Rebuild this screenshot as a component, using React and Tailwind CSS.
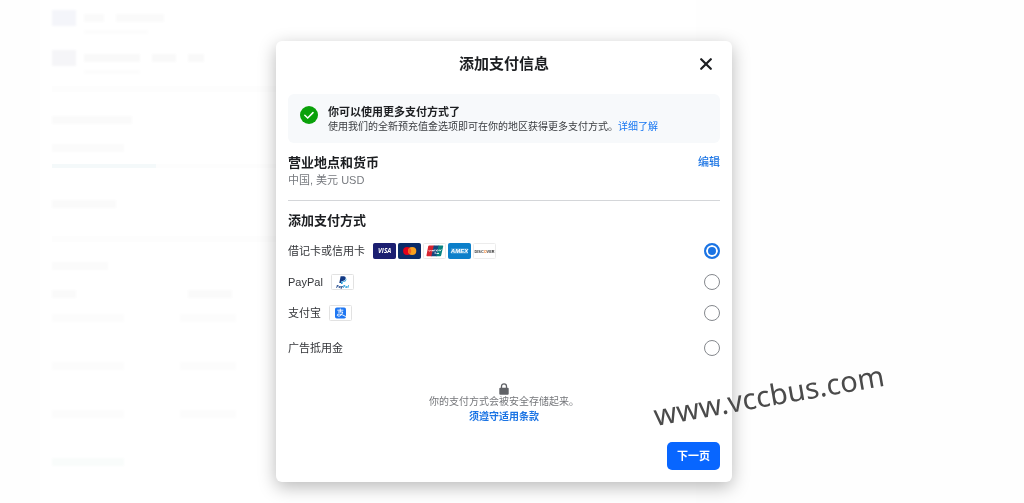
import { useState } from 'react';
import clsx from 'clsx';

function CardFrame({ bg, border, children }) {
  return (
    <svg viewBox="0 0 23 16" className="w-[23px] h-4 shrink-0" aria-hidden="true">
      <rect x="0.5" y="0.5" width="22" height="15" rx="1" fill={bg} stroke={border || bg} />
      {children}
    </svg>
  );
}

function Visa() {
  return (
    <CardFrame bg="#1b1f71">
      <text x="11.7" y="10.3" textAnchor="middle" fontFamily="Open Sans" fontSize="6.4" fontWeight="700" fontStyle="italic" fill="#fff">
        VISA
      </text>
    </CardFrame>
  );
}

function Mastercard() {
  return (
    <CardFrame bg="#0a2c69">
      <circle cx="9.2" cy="8" r="4.1" fill="#e2001a" />
      <circle cx="14.2" cy="8" r="4.1" fill="#f9a11f" />
      <path d="M11.7 4.8a4.1 4.1 0 0 1 0 6.4a4.1 4.1 0 0 1 0-6.4z" fill="#f26122" />
    </CardFrame>
  );
}

function UnionPay() {
  return (
    <CardFrame bg="#fff" border="#e8e8e8">
      <path d="M6.2 2.5h5.2L9 13.2H4.2q-.9 0-.7-.9L5.2 3.3q.2-.8 1-.8z" fill="#d8232f" />
      <path d="M10.8 2.5h5.4L13.8 13.2H8.4z" fill="#16467e" />
      <path d="M15.6 2.5h4q.8 0 .6.8l-2 9q-.2.9-1 .9h-4z" fill="#08827f" />
      <path d="M5.6 7.6q.9 1.5 2-.6M8.4 8.3l.9-1.3.7 1.3.8-1.5M12 6.4l-.4 1.8M13.1 8.3q.5-2 1.6-1.4t-.3 1.5M16.3 6.5l.7 1.6 1.3-1.8" fill="none" stroke="#fff" strokeWidth="0.8" />
      <path d="M11.5 10h1.5M13.5 10.4h2.5" stroke="#fff" strokeWidth="1" />
    </CardFrame>
  );
}

function Amex() {
  return (
    <CardFrame bg="#0b7fca">
      <rect x="3" y="5.2" width="17" height="5.6" fill="#7fc0ea" opacity="0.4" />
      <text x="11.5" y="10.1" textAnchor="middle" fontFamily="Liberation Sans" fontSize="6" fontWeight="700" fontStyle="italic" fill="#fff">
        AMEX
      </text>
    </CardFrame>
  );
}

function Discover() {
  return (
    <CardFrame bg="#fff" border="#ececec">
      <text x="11.5" y="9.5" textAnchor="middle" fontFamily="Liberation Sans" fontSize="3.8" fontWeight="700" fill="#333">
        DISC<tspan fill="#f47b20">O</tspan>VER
      </text>
    </CardFrame>
  );
}

function PayPal() {
  return (
    <CardFrame bg="#fff" border="#e2e2e2">
      <path d="M9.6 2.2h3.4q2.2.2 1.7 2.4-.5 2.3-2.9 2.300h-1.200L10.200 9H8.300z" fill="#123984" />
      <path d="M14.900 4.200q.8.6.4 1.900-.6 2-2.800 2h-.7l-.4 1.900H9.900l.5-2.600h1.400q2.700 0 3.100-3.200z" fill="#1f9ada" />
      <text x="11.5" y="13.6" textAnchor="middle" fontFamily="Open Sans" fontSize="3.8" fontWeight="800" fontStyle="italic" fill="#153f86">
        Pay<tspan fill="#1f9ada">Pal</tspan>
      </text>
    </CardFrame>
  );
}

function Alipay() {
  return (
    <CardFrame bg="#fff" border="#e2e2e2">
      <rect x="6" y="2.5" width="11" height="11" rx="1.8" fill="#1f77f2" />
      <path d="M8.300 5.200h6M11.300 3.600v3.400M9 7h4.800q-.7 3-3.100 4-2.300.5-2.500-.8 0-1.500 2.500-1.100 2.700.5 6.300 2.500" fill="none" stroke="#fff" strokeWidth="0.9" />
    </CardFrame>
  );
}

const METHODS = [
  { id: 'card', label: '借记卡或信用卡', logos: [Visa, Mastercard, UnionPay, Amex, Discover], row: 'h-[31px]' },
  { id: 'paypal', label: 'PayPal', logos: [PayPal], row: 'h-[31px]' },
  { id: 'alipay', label: '支付宝', logos: [Alipay], row: 'h-[31px]' },
  { id: 'coupon', label: '广告抵用金', logos: [], row: 'h-[39px]' },
];

// Washed-out billing page that sits behind the dialog
function BillingPage() {
  return (
    <div className="h-full pl-10 bg-[#fefefe]" aria-hidden="true">
      <div className="w-2/3 h-full pl-3 bg-white">
        <div className="flex gap-2 pt-[10px] blur-[1px]">
          <div className="w-6 h-4 bg-[#f4f5fa]" />
          <div>
            <div className="flex gap-3 pt-1">
              <div className="w-5 h-2 bg-[#fafafa]" />
              <div className="w-12 h-2 bg-[#fafafa]" />
            </div>
            <div className="w-16 h-1 mt-2 bg-[#fcfcfc]" />
          </div>
        </div>
        <div className="flex gap-2 pt-4 blur-[1px]">
          <div className="w-6 h-4 bg-[#f5f5f8]" />
          <div>
            <div className="flex gap-3 pt-1">
              <div className="w-14 h-2 bg-[#f9f9f9]" />
              <div className="w-6 h-2 bg-[#f9f9f9]" />
              <div className="w-4 h-2 bg-[#f9f9f9]" />
            </div>
            <div className="w-14 h-1 mt-2 bg-[#fcfcfc]" />
          </div>
        </div>
        <div className="h-[6px] mt-3 bg-[#fdfdfd]" />
        <div className="w-20 h-2 mt-6 bg-[#fafafa] blur-[1px]" />
        <div className="w-18 h-2 mt-5 bg-[#fbfbfb] blur-[1px]" />
        <div className="h-1 mt-3 bg-[#fdfdfd]">
          <div className="w-26 h-1 bg-[#f4f9fa]" />
        </div>
        <div className="w-16 h-2 mt-8 bg-[#fafafa] blur-[1px]" />
        <div className="h-[6px] mt-7 bg-[#fdfdfd]" />
        <div className="w-14 h-2 mt-5 bg-[#fbfbfb] blur-[1px]" />
        <div className="flex gap-28 mt-5 blur-[1px]">
          <div className="w-6 h-2 bg-[#fafafa]" />
          <div className="w-11 h-2 bg-[#fafafa]" />
        </div>
        <div className="flex gap-14 mt-4 blur-[1px]">
          <div className="w-18 h-2 bg-[#fcfcfc]" />
          <div className="w-14 h-2 bg-[#fcfcfc]" />
        </div>
        <div className="flex gap-14 mt-10 blur-[1px]">
          <div className="w-18 h-2 bg-[#fcfcfc]" />
          <div className="w-14 h-2 bg-[#fcfcfc]" />
        </div>
        <div className="flex gap-14 mt-10 blur-[1px]">
          <div className="w-18 h-2 bg-[#fcfcfc]" />
          <div className="w-14 h-2 bg-[#fcfcfc]" />
        </div>
        <div className="w-18 h-2 mt-10 bg-[#f9fcfb] blur-[1px]" />
      </div>
    </div>
  );
}

function PaymentDialog() {
  const [method, setMethod] = useState('card');

  return (
    <section
      role="dialog"
      aria-labelledby="dialog-title"
      className="w-full max-w-[456px] px-3 pb-3 rounded-md bg-white shadow-[0_5px_18px_rgba(0,0,0,0.28)]"
    >
      <header className="grid grid-cols-[1fr_auto_1fr] items-center h-[45px]">
        <h1 id="dialog-title" className="col-start-2 text-[15px] leading-5 font-bold text-[#1c1e21]">
          添加支付信息
        </h1>
        <button type="button" aria-label="关闭" className="justify-self-end mr-2 cursor-pointer">
          <svg viewBox="0 0 12 12" className="size-3" aria-hidden="true">
            <path d="M1.2 1.2l9.6 9.6M10.8 1.2L1.2 10.8" stroke="#1c1e21" strokeWidth="2.2" strokeLinecap="round" />
          </svg>
        </button>
      </header>

      <div className="flex gap-[10px] mt-2 px-3 py-[10px] rounded-md bg-[#f7f9fb]">
        <svg viewBox="0 0 18 18" className="size-[18px] mt-[2px] shrink-0" aria-hidden="true">
          <circle cx="9" cy="9" r="9" fill="#0aa10a" />
          <path d="M4.8 9.3l2.9 2.7 5.3-5.4" fill="none" stroke="#fff" strokeWidth="1.5" strokeLinecap="round" />
        </svg>
        <div>
          <h2 className="text-[11px] leading-4 font-bold text-[#1c1e21]">你可以使用更多支付方式了</h2>
          <p className="text-[10px] leading-[13px] text-[#3a3c40]">
            使用我们的全新预充值金选项即可在你的地区获得更多支付方式。<a href="#learn-more" className="text-[#1877f2]">详细了解</a>
          </p>
        </div>
      </div>

      <div className="flex items-start justify-between pt-[11px] pb-3 border-b border-[#d4d6d9]">
        <div>
          <h2 className="text-[13px] leading-[18px] font-bold text-[#1c1e21]">营业地点和货币</h2>
          <p className="text-[11px] leading-4 text-[#777a7f]">中国, 美元 USD</p>
        </div>
        <button type="button" className="text-[11px] leading-4 font-medium text-[#1b74e4] cursor-pointer">
          编辑
        </button>
      </div>

      <fieldset>
        <legend className="pt-[11px] pb-[5px] text-[13px] leading-[18px] font-bold text-[#1c1e21]">添加支付方式</legend>
        {METHODS.map(({ id, label, logos, row }) => (
          <div key={id} className={clsx('flex items-center justify-between', row)}>
            <label htmlFor={id} className="flex items-center gap-2 text-[11px] leading-4 text-[#333539]">
              {label}
              <span className="flex gap-[2px]">
                {logos.map((Logo) => (
                  <Logo key={Logo.name} />
                ))}
              </span>
            </label>
            <input
              type="radio"
              id={id}
              name="method"
              checked={method === id}
              onChange={() => setMethod(id)}
              className="appearance-none size-4 rounded-full border border-[#85888d] bg-white checked:border-2 checked:border-[#1b74e4] checked:bg-[#1b74e4] checked:shadow-[inset_0_0_0_2px_#fff]"
            />
          </div>
        ))}
      </fieldset>

      <div className="flex flex-col items-center pt-4 text-[10px]">
        <svg viewBox="0 0 10 12" className="w-[10px] h-3" aria-hidden="true">
          <path d="M2.5 5V3.3a2.500 2.500 0 0 1 5 0V5" fill="none" stroke="#606266" strokeWidth="1.3" />
          <rect x="0.3" y="4.8" width="9.4" height="7" rx="1" fill="#606266" />
        </svg>
        <p className="leading-[14px] text-[#75777b]">你的支付方式会被安全存储起来。</p>
        <a href="#terms" className="leading-4 font-bold text-[#1b74e4]">须遵守适用条款</a>
      </div>

      <footer className="flex justify-end pt-[17px]">
        <button type="button" className="h-7 px-[10px] rounded-[5px] bg-[#0866ff] text-[11px] leading-4 font-bold text-white cursor-pointer">
          下一页
        </button>
      </footer>
    </section>
  );
}

export default function App() {
  return (
    <div className="h-screen overflow-hidden bg-[#fefefe] font-['Liberation_Sans','Noto_Sans_CJK_SC',sans-serif]">
      <BillingPage />
      <div className="fixed inset-0 flex items-start justify-center pt-[41px] pr-4">
        <PaymentDialog />
      </div>
      <div className="fixed left-1/2 top-[375px] ml-[140px] -rotate-10 font-['Noto_Sans',sans-serif] text-[29px] leading-10 text-[#4a4a4a] pointer-events-none">
        www.vccbus.com
      </div>
    </div>
  );
}
